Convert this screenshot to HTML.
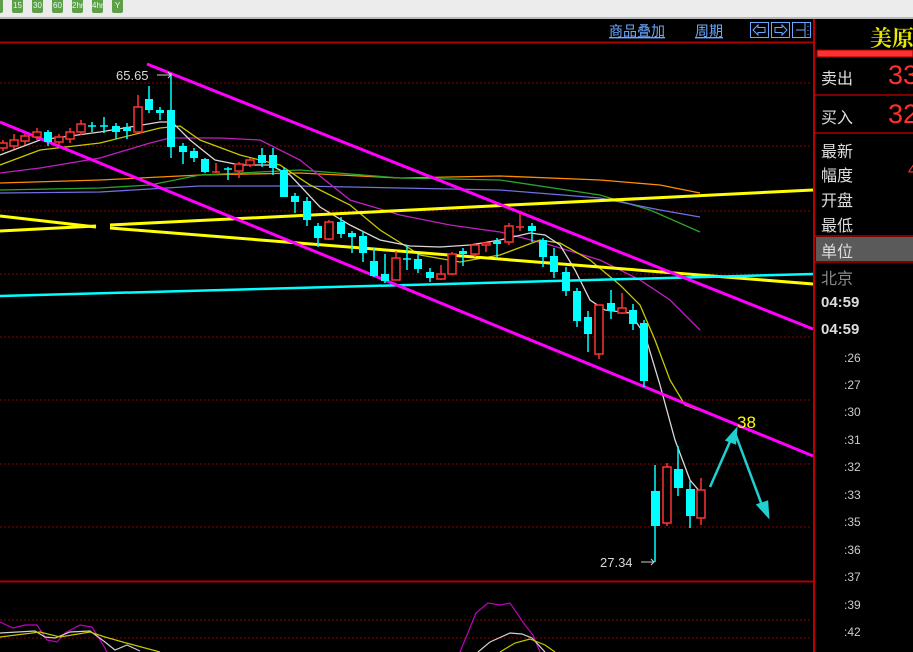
<!DOCTYPE html>
<html><head><meta charset="utf-8"><style>
body{margin:0;width:913px;height:652px;overflow:hidden;background:#000;font-family:"Liberation Sans","Noto Sans CJK SC",sans-serif;position:relative}
.tb{position:absolute;left:0;top:0;width:913px;height:17px;background:#ececec;border-bottom:2px solid #b8b8b8}
.bt{position:absolute;top:0;height:13px;width:11px;background:#5f9f4a;border-radius:0 0 2px 2px;color:#dfe;font-size:8px;text-align:center;line-height:12px}
.t{position:absolute;color:#ddd;font-size:16px;white-space:nowrap}
.r{position:absolute;left:844px;color:#ccc;font-size:12px;font-family:"Liberation Sans",sans-serif}
</style></head><body>
<div class="tb">
<div class="bt" style="left:-8px"></div>
<div class="bt" style="left:12px">15</div><div class="bt" style="left:32px">30</div><div class="bt" style="left:52px">60</div><div class="bt" style="left:72px">2hr</div><div class="bt" style="left:92px">4hr</div><div class="bt" style="left:112px">Y</div>
</div>
<svg width="913" height="652" style="position:absolute;left:0;top:0">
<g stroke="#8b0000" stroke-dasharray="2,2" stroke-width="1">
<line x1="0" y1="83" x2="812" y2="83"/><line x1="0" y1="146" x2="812" y2="146"/><line x1="0" y1="211" x2="812" y2="211"/><line x1="0" y1="274" x2="812" y2="274"/><line x1="0" y1="337" x2="812" y2="337"/><line x1="0" y1="400" x2="812" y2="400"/><line x1="0" y1="464" x2="812" y2="464"/><line x1="0" y1="527" x2="812" y2="527"/><line x1="0" y1="620" x2="812" y2="620"/><line x1="0" y1="638" x2="812" y2="638"/>
</g>
<line x1="0" y1="42.5" x2="814" y2="42.5" stroke="#a00" stroke-width="2"/>
<line x1="0" y1="581.5" x2="814" y2="581.5" stroke="#a00" stroke-width="2"/>
<line x1="814" y1="19" x2="814" y2="652" stroke="#b00" stroke-width="2"/>
<text x="609" y="36" fill="#6aa8ff" font-size="14" text-decoration="underline">商品叠加</text>
<text x="695" y="36" fill="#6aa8ff" font-size="14" text-decoration="underline">周期</text>
<g stroke="#6aa8ff" fill="none"><rect x="750.5" y="22.5" width="18" height="15"/><rect x="771.5" y="22.5" width="18" height="15"/><rect x="792.5" y="22.5" width="18" height="15"/>
<path d="M765 27.5H758V25l-5 5 5 5V32.5H765ZM775 27.5H782V25l5 5-5 5V32.5H775ZM805 23v14M796 30h9M808 26v1M808 30v1M808 34v1"/></g>
<g fill="none" stroke-width="1.3">
<polyline stroke="#ff8c00" points="0,183 100,180 200,175 300,173 400,178 500,176 600,180 660,185 700,193"/>
<polyline stroke="#2aa52a" points="0,190 100,188 150,185 200,175 300,170 400,178 500,180 600,195 650,210 700,232"/>
<polyline stroke="#7070e0" points="0,193 100,192 200,186 300,186 400,188 500,190 600,198 660,210 700,217"/>
<polyline stroke="#c020c0" points="0,173 40,168 100,158 150,143 170,138 220,138 260,140 300,160 350,200 400,215 450,225 500,232 550,245 600,260 640,280 670,300 700,330"/>
<polyline stroke="#c8c800" points="0,165 40,150 100,143 160,128 180,126 200,140 240,155 280,165 310,185 350,205 380,230 420,255 460,262 500,255 540,240 560,243 590,260 620,285 640,305 655,340 670,380 685,405 698,410"/>
<polyline stroke="#d8d8d8" points="0,155 40,140 100,132 160,122 172,122 190,140 215,160 240,165 270,165 290,175 320,207 350,225 380,240 410,246 440,247 470,245 500,240 530,233 545,235 560,245 575,270 590,300 605,310 630,313 645,335 660,385 675,440 690,480 701,493"/>
</g>
<g stroke-width="3" fill="none">
<line x1="0" y1="231" x2="96" y2="226" stroke="#ffff00"/><line x1="110" y1="225" x2="813" y2="190" stroke="#ffff00"/>
<line x1="0" y1="216" x2="96" y2="227" stroke="#ffff00"/><line x1="110" y1="228" x2="813" y2="284" stroke="#ffff00"/>
<line x1="0" y1="296" x2="813" y2="274" stroke="#00ffff" stroke-width="2.5"/>
<line x1="147" y1="64" x2="813" y2="329" stroke="#ff00ff"/>
<line x1="0" y1="122" x2="813" y2="456" stroke="#ff00ff"/>
</g>
<g stroke="#ff3232" fill="none" stroke-width="1.5">
<path d="M3 140V151M14 134V149M25 134V145M37 128V140M59 134V146M70 128V143M81 120V135M138 95V132M216 163V173M239 162V178M250 158V167M329 220V240M396 251V280M441 265V280M452 252V275M475 243V257M486 242V252M509 223V245M520 214V231M599 305V359M622 293V314M667 463V526M701 478V525M212 172H220M516 227H524"/>
<rect x="-1" y="143" width="8" height="5" fill="#000"/><rect x="10" y="140" width="8" height="6" fill="#000"/><rect x="21" y="136" width="8" height="5" fill="#000"/><rect x="33" y="132" width="8" height="5" fill="#000"/><rect x="55" y="137" width="8" height="5" fill="#000"/><rect x="66" y="132" width="8" height="7" fill="#000"/><rect x="77" y="124" width="8" height="8" fill="#000"/><rect x="134" y="107" width="8" height="25" fill="#000"/><rect x="235" y="164" width="8" height="7" fill="#000"/><rect x="246" y="160" width="8" height="5" fill="#000"/><rect x="325" y="222" width="8" height="17" fill="#000"/><rect x="392" y="258" width="8" height="22" fill="#000"/><rect x="437" y="274" width="8" height="5" fill="#000"/><rect x="448" y="254" width="8" height="20" fill="#000"/><rect x="471" y="245" width="8" height="9" fill="#000"/><rect x="482" y="243" width="8" height="2" fill="#000"/><rect x="505" y="226" width="8" height="16" fill="#000"/><rect x="595" y="305" width="8" height="49" fill="#000"/><rect x="618" y="308" width="8" height="5" fill="#000"/><rect x="663" y="467" width="8" height="56" fill="#000"/><rect x="697" y="490" width="8" height="28" fill="#000"/>
</g>
<g fill="#00ffff" stroke="#00ffff" stroke-width="1.5">
<path d="M48 130V146M92 122V132M104 117V133M116 123V139M127 123V139M149 86V113M160 107V120M171 73V158M183 143V164M194 148V162M205 158V173M228 167V180M262 148V167M273 148V175M284 167V197M295 193V213M307 197V226M318 223V247M341 217V238M352 231V253M363 231V262M374 248V277M385 254V283M407 245V270M418 254V273M430 268V282M463 248V266M497 238V258M532 223V242M543 238V267M554 248V278M566 267V296M577 288V327M588 311V352M611 290V319M633 304V330M644 320V387M655 465V562M678 446V496M690 481V528M88 126H96M100 126H108M224 169H232M403 259H411"/>
<g stroke="none">
<rect x="44" y="132" width="8" height="10"/><rect x="112" y="126" width="8" height="6"/><rect x="123" y="127" width="8" height="4"/><rect x="145" y="99" width="8" height="11"/><rect x="156" y="110" width="8" height="3"/><rect x="167" y="110" width="8" height="37"/><rect x="179" y="146" width="8" height="6"/><rect x="190" y="151" width="8" height="7"/><rect x="201" y="159" width="8" height="13"/><rect x="258" y="155" width="8" height="8"/><rect x="269" y="155" width="8" height="13"/><rect x="280" y="170" width="8" height="27"/><rect x="291" y="196" width="8" height="6"/><rect x="303" y="201" width="8" height="19"/><rect x="314" y="226" width="8" height="12"/><rect x="337" y="222" width="8" height="12"/><rect x="348" y="233" width="8" height="4"/><rect x="359" y="236" width="8" height="17"/><rect x="370" y="261" width="8" height="15"/><rect x="381" y="274" width="8" height="7"/><rect x="414" y="259" width="8" height="10"/><rect x="426" y="272" width="8" height="6"/><rect x="459" y="251" width="8" height="3"/><rect x="493" y="241" width="8" height="3"/><rect x="528" y="226" width="8" height="5"/><rect x="539" y="240" width="8" height="17"/><rect x="550" y="256" width="8" height="16"/><rect x="562" y="272" width="8" height="19"/><rect x="573" y="291" width="8" height="30"/><rect x="584" y="317" width="8" height="17"/><rect x="607" y="303" width="8" height="8"/><rect x="629" y="310" width="8" height="14"/><rect x="640" y="323" width="8" height="58"/><rect x="651" y="491" width="9" height="35"/><rect x="674" y="469" width="9" height="19"/><rect x="686" y="489" width="9" height="27"/>
</g></g>
<text x="116" y="80" fill="#d8d8d8" font-size="13">65.65</text><path d="M157 75H171M168 72l3 3-3 3" stroke="#ccc" fill="none"/>
<text x="600" y="567" fill="#d8d8d8" font-size="13">27.34</text><path d="M641 562H654M651 559l3 3-3 3" stroke="#ccc" fill="none"/>
<g stroke="#20d0d0" stroke-width="2.5" fill="#20d0d0">
<path d="M710 487L732 437" fill="none"/><path d="M736 430L727 440 735 443Z"/>
<path d="M735 433L763 508" fill="none"/><path d="M768 516L758 505 767 502Z"/>
</g>
<text x="737" y="428" fill="#ffff00" font-size="17">38</text>
<g fill="none" stroke-width="1.2">
<polyline stroke="#c000c0" points="0,622 13,628 25,625 37,625 47,640 57,642 65,633 80,625 92,627 105,648 110,660"/>
<polyline stroke="#d0d0d0" points="0,633 35,631 45,637 55,638 70,632 90,631 105,642 115,650 127,645 140,651"/>
<polyline stroke="#c8c800" points="0,637 40,632 60,637 90,632 105,637 130,644 160,652"/>
<polyline stroke="#c000c0" points="460,652 476,613 488,603 500,605 510,603 525,625 533,635 540,652"/>
<polyline stroke="#d0d0d0" points="478,652 490,642 510,633 522,634 532,638 545,652"/>
<polyline stroke="#c8c800" points="500,652 515,643 530,639 545,645 555,652"/>
</g>
<rect x="817" y="50" width="96" height="7" fill="#ff3030" stroke="#900"/>
<g stroke="#a00" stroke-width="1.5"><line x1="815" y1="95" x2="913" y2="95"/><line x1="815" y1="133" x2="913" y2="133"/><line x1="815" y1="236" x2="913" y2="236"/><line x1="815" y1="262" x2="913" y2="262"/></g>
<rect x="816" y="237" width="97" height="24" fill="#5a5a5a"/>
</svg>
<div class="t" style="left:870px;top:22px;color:#e8e800;font-size:22px;font-family:'Noto Serif CJK SC',serif;font-weight:bold">美原</div>
<div class="t" style="left:821px;top:65px">卖出</div><div class="t" style="left:888px;top:60px;color:#ff3030;font-size:27px">33</div>
<div class="t" style="left:821px;top:104px">买入</div><div class="t" style="left:888px;top:99px;color:#ff3030;font-size:27px">32</div>
<div class="t" style="left:821px;top:138px">最新</div>
<div class="t" style="left:821px;top:162px">幅度</div><div class="t" style="left:908px;top:162px;color:#ff3030">4</div>
<div class="t" style="left:821px;top:187px">开盘</div>
<div class="t" style="left:821px;top:212px">最低</div>
<div class="t" style="left:821px;top:238px">单位</div>
<div class="t" style="left:821px;top:265px;color:#888">北京</div>
<div class="t" style="left:821px;top:294px;font-size:15px;font-weight:bold;color:#ddd">04:59</div>
<div class="t" style="left:821px;top:321px;font-size:15px;font-weight:bold;color:#ddd">04:59</div>
<div class="r" style="top:351px">:26</div><div class="r" style="top:378px">:27</div><div class="r" style="top:405px">:30</div><div class="r" style="top:433px">:31</div><div class="r" style="top:460px">:32</div><div class="r" style="top:488px">:33</div><div class="r" style="top:515px">:35</div><div class="r" style="top:543px">:36</div><div class="r" style="top:570px">:37</div><div class="r" style="top:598px">:39</div><div class="r" style="top:625px">:42</div>
</body></html>
